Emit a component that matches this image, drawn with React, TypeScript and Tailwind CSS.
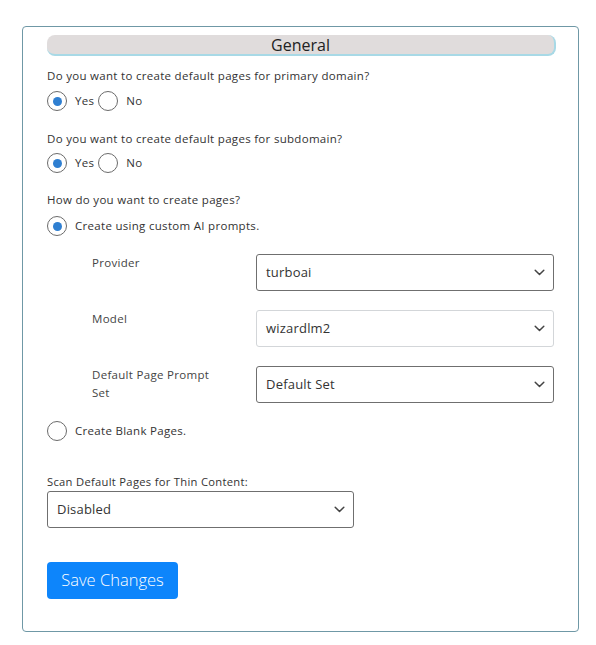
import { useState } from "react";

const font = { fontFamily: '"Open Sans", "Liberation Sans", sans-serif' };

const Chevron = () => (
  <svg width="11" height="7" viewBox="0 0 11 7" className="shrink-0">
    <path d="M1.2 1.2 L5.5 5.5 L9.8 1.2" fill="none" stroke="#444" strokeWidth="1.5" strokeLinecap="round" strokeLinejoin="round" />
  </svg>
);

const Radio = ({ checked }: { checked: boolean }) => (
  <span className="w-5 h-5 rounded-full border-[1.5px] border-[#6b6b6b] flex items-center justify-center shrink-0 bg-white">
    {checked && <span className="w-[9px] h-[9px] rounded-full bg-[#2f7fd1]" />}
  </span>
);

const Select = ({ value, light = false, className = "" }: { value: string; light?: boolean; className?: string }) => (
  <div className={`h-[37px] rounded-[3px] border flex items-center justify-between pl-[9px] pr-[8px] bg-white ${light ? "border-[#d3d6d9]" : "border-[#6f6f6f]"} ${className}`}>
    <span className="text-[13px] text-[#333] tracking-[0.2px]">{value}</span>
    <Chevron />
  </div>
);

const YesNo = ({ value, onChange }: { value: string; onChange: (v: string) => void }) => (
  <div className="flex items-center h-5 text-[11.5px] tracking-[0.3px] text-[#333]">
    <button className="flex items-center" onClick={() => onChange("yes")}>
      <Radio checked={value === "yes"} />
      <span className="ml-2">Yes</span>
    </button>
    <button className="flex items-center ml-1" onClick={() => onChange("no")}>
      <Radio checked={value === "no"} />
      <span className="ml-2">No</span>
    </button>
  </div>
);

export default function App() {
  const [primary, setPrimary] = useState("yes");
  const [sub, setSub] = useState("yes");
  const [mode, setMode] = useState("ai");

  return (
    <div className="min-h-screen bg-white pt-[26px] pl-[22px]" style={font}>
      <div className="w-[557px] h-[606px] rounded-[4px] border-[1.5px] border-[#6f98a6] pt-[8px] pl-[24px] pr-[22px] text-[11.5px] tracking-[0.3px] text-[#333]">
        <div className="h-[21px] rounded-[8px] bg-[#e0dcdc] border-b-2 border-r-2 border-[#a8d9e6] flex items-center justify-center">
          <span className="text-[16px] text-[#222] leading-none tracking-normal">General</span>
        </div>

        <p className="mt-[12px] leading-[16px]">Do you want to create default pages for primary domain?</p>
        <div className="mt-[7px]">
          <YesNo value={primary} onChange={setPrimary} />
        </div>

        <p className="mt-[20px] leading-[16px]">Do you want to create default pages for subdomain?</p>
        <div className="mt-[6px]">
          <YesNo value={sub} onChange={setSub} />
        </div>

        <p className="mt-[19px] leading-[16px]">How do you want to create pages?</p>
        <button className="mt-[8px] flex items-center" onClick={() => setMode("ai")}>
          <Radio checked={mode === "ai"} />
          <span className="ml-2">Create using custom AI prompts.</span>
        </button>

        <div className="pl-[45px] pr-[2px] mt-[18px] flex flex-col gap-[19px] text-[#444]">
          <div className="flex">
            <span className="w-[164px] leading-[18px]">Provider</span>
            <Select value="turboai" className="flex-1" />
          </div>
          <div className="flex">
            <span className="w-[164px] leading-[18px]">Model</span>
            <Select value="wizardlm2" light className="flex-1" />
          </div>
          <div className="flex">
            <span className="w-[164px] pr-[34px] leading-[18px]">Default Page Prompt Set</span>
            <Select value="Default Set" className="flex-1" />
          </div>
        </div>

        <button className="mt-[18px] flex items-center" onClick={() => setMode("blank")}>
          <Radio checked={mode === "blank"} />
          <span className="ml-2">Create Blank Pages.</span>
        </button>

        <p className="mt-[34px] text-[11.2px] leading-[14px]">Scan Default Pages for Thin Content:</p>
        <Select value="Disabled" className="mt-[2px] w-[307px]" />

        <button className="mt-[34px] w-[131px] h-[37px] rounded-[4px] bg-[#0d85fb] text-white text-[16.5px] tracking-normal font-light">
          Save Changes
        </button>
      </div>
    </div>
  );
}
